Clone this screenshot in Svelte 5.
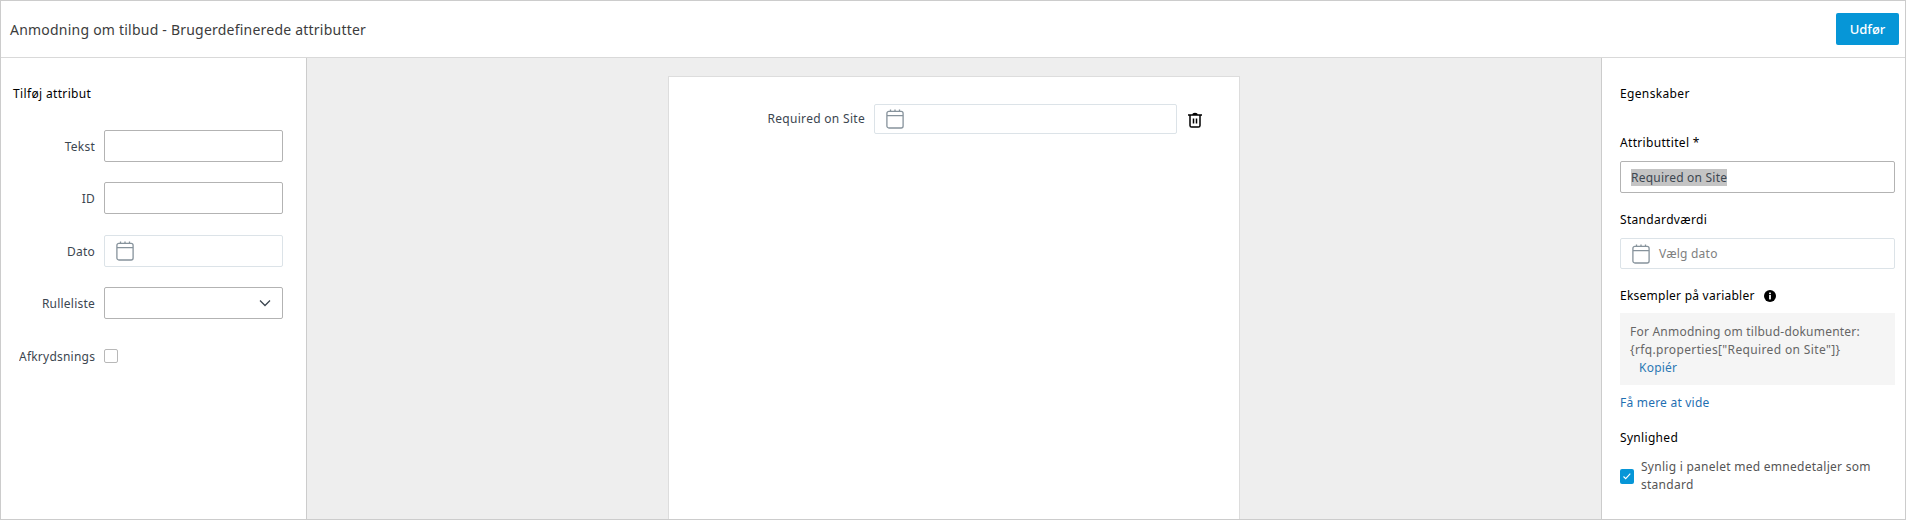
<script>
  const fields = [
    { label: 'Tekst', kind: 'text' },
    { label: 'ID', kind: 'text' },
    { label: 'Dato', kind: 'date' },
    { label: 'Rulleliste', kind: 'select' },
    { label: 'Afkrydsningsfelt', kind: 'check' }
  ];
</script>

{#snippet calendar()}
  <svg class="cal" viewBox="0 0 18 20" fill="none" stroke="#87939c" stroke-width="1.3">
    <rect x="0.9" y="2.4" width="16.2" height="16.6" rx="2"/>
    <path d="M1 6.6h16M4.5 0.4v2M9 0.4v2M13.5 0.4v2"/>
  </svg>
{/snippet}

<div class="app">
  <header class="top">
    <h1>Anmodning om tilbud - Brugerdefinerede attributter</h1>
    <button class="primary">Udfør</button>
  </header>
  <div class="body">
    <aside class="left">
      <h2>Tilføj attribut</h2>
      <div class="fields">
        {#each fields as f}
          <div class="row {f.kind}">
            <span class="lab">{f.label}</span>
            {#if f.kind === 'text'}
              <div class="inp"></div>
            {:else if f.kind === 'date'}
              <div class="inp soft">{@render calendar()}</div>
            {:else if f.kind === 'select'}
              <div class="inp sel">
                <svg class="chev" viewBox="0 0 12 8" fill="none" stroke="#3c4650" stroke-width="1.3"><path d="M1 1.5l5 5 5-5"/></svg>
              </div>
            {:else}
              <div class="box"></div>
            {/if}
          </div>
        {/each}
      </div>
    </aside>
    <main class="center">
      <div class="sheet">
        <div class="attr">
          <span class="attr-lab">Required on Site</span>
          <div class="inp soft attr-inp">{@render calendar()}</div>
          <svg class="trash" viewBox="0 0 14 16" fill="none" stroke="#000" stroke-width="1.5">
            <path d="M0 3h14M5 2.6C5 1 9 1 9 2.6M2 3.4V13.5c0 1 .6 1.6 1.6 1.6h6.8c1 0 1.6-.6 1.6-1.6V3.4M5.5 6.5v5M8.5 6.5v5"/>
          </svg>
        </div>
      </div>
    </main>
    <aside class="right">
      <h2 class="egen">Egenskaber</h2>
      <div class="dark l1">Attributtitel *</div>
      <div class="inp strong"><span class="sel-text">Required on Site</span></div>
      <div class="dark l2">Standardværdi</div>
      <div class="inp soft std">{@render calendar()}<span class="ph">Vælg dato</span></div>
      <div class="dark l3">Eksempler på variabler
        <svg class="info" viewBox="0 0 12 12"><circle cx="6" cy="6" r="6" fill="#000"/><rect x="5.1" y="5" width="1.8" height="4.4" fill="#fff"/><rect x="5.1" y="2.6" width="1.8" height="1.6" fill="#fff"/></svg>
      </div>
      <div class="example">
        <div>For Anmodning om tilbud-dokumenter:</div>
        <div class="code">{'{'}rfq.properties["Required on Site"]{'}'}</div>
        <div class="copy">Kopiér</div>
      </div>
      <div class="more">Få mere at vide</div>
      <div class="dark l4">Synlighed</div>
      <div class="vis">
        <div class="checked">
          <svg viewBox="0 0 14 14" fill="none" stroke="#fff" stroke-width="1.1"><path d="M3.5 7.5l2.2 2.2 4.6-5"/></svg>
        </div>
        <span>Synlig i panelet med emnedetaljer som standard</span>
      </div>
    </aside>
  </div>
</div>

<style>
  :global(body) { margin: 0; background: #fff; }
  .app {
    box-sizing: border-box;
    width: 1906px;
    height: 520px;
    border: 1px solid #ccc;
    display: flex;
    flex-direction: column;
    overflow: hidden;
    font-family: "Noto Sans", sans-serif;
    font-size: 12px;
    letter-spacing: 0.22px;
    color: #3c4650;
  }
  .top {
    height: 57px;
    flex: none;
    box-sizing: border-box;
    border-bottom: 1px solid #d9d9d9;
    display: flex;
    align-items: center;
    justify-content: space-between;
    padding: 0 6px 0 9px;
  }
  h1 { margin: 0; font-size: 14px; font-weight: 400; color: #3c3c3c; letter-spacing: 0.22px; }
  .primary {
    width: 63px;
    height: 32px;
    margin-top: -1px;
    border: 0;
    border-radius: 2px;
    background: #0696d7;
    color: #fff;
    font: 500 13px "Noto Sans", sans-serif;
  }
  .body { flex: 1; display: flex; min-height: 0; }
  .left {
    width: 306px;
    flex: none;
    box-sizing: border-box;
    border-right: 1px solid #ccc;
    padding: 27px 0 0 12px;
  }
  h2 { margin: 0; font-size: 12px; font-weight: 400; color: #000; line-height: 18px; letter-spacing: 0.35px; }
  .fields { margin-top: 27px; display: flex; flex-direction: column; gap: 20px; }
  .row { display: flex; align-items: center; gap: 9px; height: 32px; }
  .row.date, .row.check { margin-top: 1px; }
  .lab { width: 82px; flex: none; text-align: right; white-space: nowrap; overflow: hidden; }
  .row.check .lab { text-align: left; width: 76px; margin-left: 6px; }
  .inp {
    box-sizing: border-box;
    width: 179px;
    height: 32px;
    border: 1px solid #b3b3b3;
    border-radius: 2px;
    background: #fff;
    display: flex;
    align-items: center;
  }
  .inp.soft { border-color: #dce3e8; padding-left: 11px; }
  .inp.sel { justify-content: flex-end; padding-right: 11px; }
  .chev { width: 12px; height: 8px; }
  .box { width: 14px; height: 14px; box-sizing: border-box; border: 1px solid #b8b8b8; border-radius: 2px; }
  .cal { width: 18px; height: 20px; flex: none; }
  .center { flex: 1; background: #eee; display: flex; justify-content: center; padding-top: 18px; }
  .sheet {
    box-sizing: border-box;
    width: 572px;
    height: 500px;
    background: #fff;
    border: 1px solid #ddd;
  }
  .attr { display: flex; align-items: flex-start; margin-top: 27px; }
  .attr-lab { margin-left: 98px; width: 98px; text-align: right; white-space: nowrap; letter-spacing: 0.3px; line-height: 30px; }
  .attr-inp { width: 303px; height: 30px; margin-left: 9px; padding-left: 10px; }
  .trash { width: 14px; height: 16px; margin: 8px 0 0 11px; }
  .right {
    width: 304px;
    flex: none;
    box-sizing: border-box;
    border-left: 1px solid #ccc;
    padding: 27px 10px 0 18px;
  }
  .right .inp { width: 275px; }
  .egen { margin-bottom: 31px; }
  .dark { color: #000; line-height: 18px; letter-spacing: 0.32px; }
  .strong { margin-top: 9px; padding-left: 10px; font-size: 12px; }
  .sel-text { background: #c4c4c4; line-height: 17px; }
  .l2 { margin-top: 18px; }
  .right .std { margin-top: 9px; height: 31px; }
  .ph { margin-left: 9px; color: #808080; }
  .l3 { margin-top: 18px; display: flex; align-items: center; gap: 9px; letter-spacing: 0.25px; }
  .info { width: 12px; height: 12px; }
  .example {
    margin-top: 8px;
    box-sizing: border-box;
    width: 275px;
    height: 72px;
    background: #f5f5f5;
    padding: 10px 10px;
    line-height: 18px;
    color: #666;
  }
  .code { letter-spacing: 0.36px; }
  .copy { color: #2b78b4; padding-left: 9px; }
  .more { color: #1f6fb2; margin-top: 9px; line-height: 18px; }
  .l4 { margin-top: 17px; }
  .vis { display: flex; align-items: center; gap: 7px; margin-top: 11px; line-height: 18px; color: #555; letter-spacing: 0.27px; }
  .checked { width: 14px; height: 15px; flex: none; background: #0696d7; border-radius: 2px; }
  .checked svg { display: block; width: 14px; height: 14px; }
</style>
